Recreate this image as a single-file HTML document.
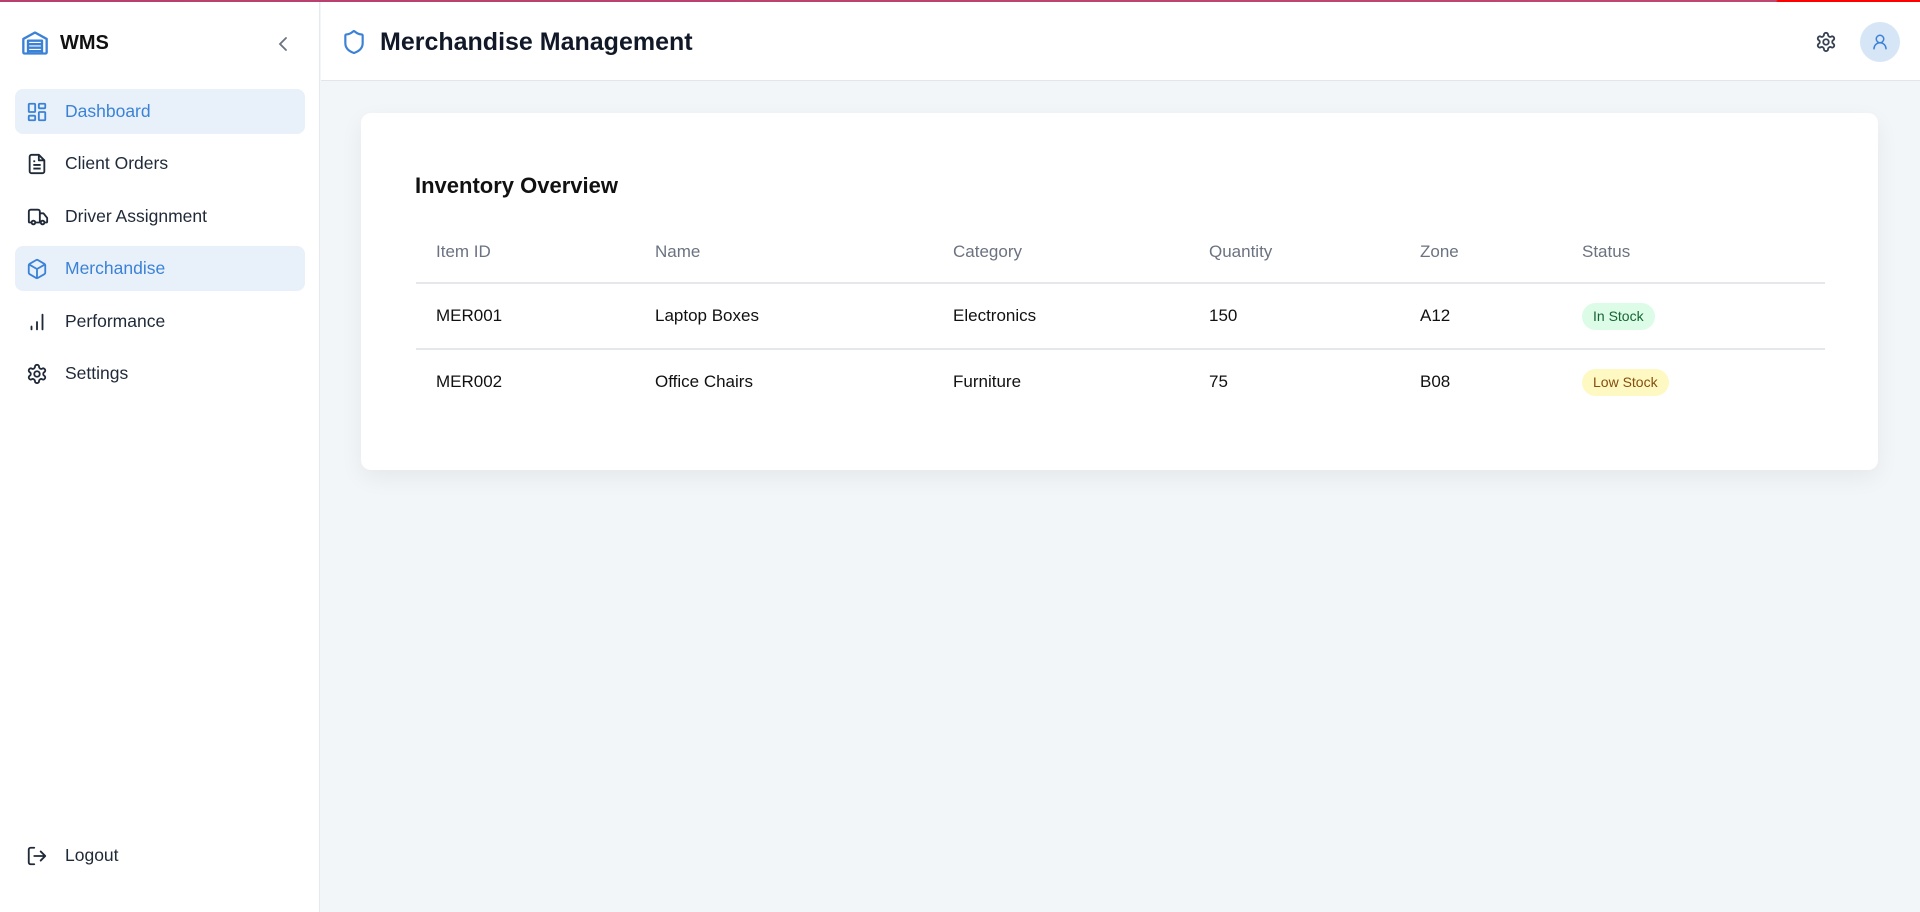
<!DOCTYPE html>
<html><head><meta charset="utf-8"><style>
*{box-sizing:border-box;margin:0;padding:0}
body{width:1920px;height:912px;overflow:hidden;font-family:"Liberation Sans",sans-serif;background:#f3f6f9;position:relative;color:#111}
.topline{position:absolute;top:0;left:0;width:1920px;height:2px;background:linear-gradient(90deg,#b8406e 0,#c04672 92.5%,#ff0000 92.6%);z-index:5}
.side{position:absolute;top:2px;left:0;width:320px;height:910px;background:#fff;border-right:1px solid #e6e9ee}
.logo{position:absolute;left:21px;top:27px}
.wms{position:absolute;left:60px;top:30px;font-weight:bold;font-size:20px}
.chev{position:absolute;left:276px;top:32px}
.nav{position:absolute;left:15px;width:290px;height:45px;border-radius:8px;display:flex;align-items:center;font-size:17.5px;color:#1f2937}
.nav.act{background:#e8f1fa;color:#3b82d6}
.nav svg{position:absolute;left:11px}
.nav span{position:absolute;left:50px}
.header{position:absolute;top:2px;left:321px;right:0;height:79px;background:#fff;border-bottom:1px solid #e2e6eb}
.title{position:absolute;left:59px;top:26px;font-size:25px;font-weight:bold;color:#111827}
.card{position:absolute;left:361px;top:113px;width:1517px;height:357px;background:#fff;border-radius:10px;box-shadow:0 8px 24px rgba(0,0,0,.06)}
.card h2{position:absolute;left:54px;top:60px;font-size:22px;font-weight:bold}
.th,.td{position:absolute;font-size:17px}
.th{color:#6b7280;top:129px}
.line{position:absolute;left:55px;width:1409px;height:2px;background:#e5e7eb}
.badge{position:absolute;left:1221px;height:27px;border-radius:14px;font-size:14px;line-height:27px;padding:0 11px}
</style></head><body>
<div class="topline"></div>
<div class="side">
<svg class="logo" width="28" height="28" viewBox="0 0 24 24" fill="none" stroke="#3b82d6" stroke-width="2" stroke-linejoin="round"><path d="M2 8.5 12 3l10 5.5V20a1 1 0 0 1-1 1H3a1 1 0 0 1-1-1z"/><path d="M6 21V10h12v11M6 13h12M6 16h12M6 19h12"/></svg>
<div class="wms">WMS</div>
<svg class="chev" width="16" height="20" viewBox="0 0 16 20" fill="none" stroke="#6b7280" stroke-width="1.8" stroke-linecap="round"><path d="M10 4 4 10l6 6"/></svg>
<div class="nav act" style="top:87px"><svg width="22" height="22" viewBox="0 0 24 24" fill="none" stroke="#3b82d6" stroke-width="2"><rect x="3" y="3" width="7" height="9" rx="1"/><rect x="14" y="3" width="7" height="5" rx="1"/><rect x="14" y="12" width="7" height="9" rx="1"/><rect x="3" y="16" width="7" height="5" rx="1"/></svg><span>Dashboard</span></div>
<div class="nav" style="top:139px"><svg width="22" height="22" viewBox="0 0 24 24" fill="none" stroke="#1f2937" stroke-width="2" stroke-linejoin="round"><path d="M14 2H6a2 2 0 0 0-2 2v16a2 2 0 0 0 2 2h12a2 2 0 0 0 2-2V8z"/><path d="M14 2v6h6M8 13h8M8 17h8M8 9h2"/></svg><span>Client Orders</span></div>
<div class="nav" style="top:192px"><svg width="24" height="22" viewBox="0 0 24 24" fill="none" stroke="#1f2937" stroke-width="2" stroke-linejoin="round"><path d="M14 18V6a2 2 0 0 0-2-2H4a2 2 0 0 0-2 2v11a1 1 0 0 0 1 1h2M15 18H9M19 18h2a1 1 0 0 0 1-1v-3.6a1 1 0 0 0-.2-.6l-3.5-4.4A1 1 0 0 0 17.5 8H14"/><circle cx="17" cy="18" r="2"/><circle cx="7" cy="18" r="2"/></svg><span>Driver Assignment</span></div>
<div class="nav act" style="top:244px"><svg width="22" height="22" viewBox="0 0 24 24" fill="none" stroke="#3b82d6" stroke-width="2" stroke-linejoin="round"><path d="M21 8a2 2 0 0 0-1-1.7l-7-4a2 2 0 0 0-2 0l-7 4A2 2 0 0 0 3 8v8a2 2 0 0 0 1 1.7l7 4a2 2 0 0 0 2 0l7-4a2 2 0 0 0 1-1.7z"/><path d="M3.3 7 12 12l8.7-5M12 22V12"/></svg><span>Merchandise</span></div>
<div class="nav" style="top:297px"><svg width="22" height="22" viewBox="0 0 24 24" fill="none" stroke="#1f2937" stroke-width="2" stroke-linecap="round"><path d="M6 20v-3M12 20v-8M18 20V4"/></svg><span>Performance</span></div>
<div class="nav" style="top:349px"><svg width="22" height="22" viewBox="0 0 24 24" fill="none" stroke="#1f2937" stroke-width="2"><path d="M12.2 2h-.4a2 2 0 0 0-2 2v.2a2 2 0 0 1-1 1.7l-.4.3a2 2 0 0 1-2 0l-.2-.1a2 2 0 0 0-2.7.7l-.2.4a2 2 0 0 0 .7 2.7l.2.1a2 2 0 0 1 1 1.7v.5a2 2 0 0 1-1 1.7l-.2.1a2 2 0 0 0-.7 2.7l.2.4a2 2 0 0 0 2.7.7l.2-.1a2 2 0 0 1 2 0l.4.3a2 2 0 0 1 1 1.7v.2a2 2 0 0 0 2 2h.4a2 2 0 0 0 2-2v-.2a2 2 0 0 1 1-1.7l.4-.3a2 2 0 0 1 2 0l.2.1a2 2 0 0 0 2.7-.7l.2-.4a2 2 0 0 0-.7-2.7l-.2-.1a2 2 0 0 1-1-1.7v-.5a2 2 0 0 1 1-1.7l.2-.1a2 2 0 0 0 .7-2.7l-.2-.4a2 2 0 0 0-2.7-.7l-.2.1a2 2 0 0 1-2 0l-.4-.3a2 2 0 0 1-1-1.7V4a2 2 0 0 0-2-2z"/><circle cx="12" cy="12" r="3"/></svg><span>Settings</span></div>
<div class="nav" style="top:831px"><svg width="22" height="22" viewBox="0 0 24 24" fill="none" stroke="#1f2937" stroke-width="2" stroke-linecap="round" stroke-linejoin="round"><path d="M9 21H5a2 2 0 0 1-2-2V5a2 2 0 0 1 2-2h4M16 17l5-5-5-5M21 12H9"/></svg><span>Logout</span></div>
</div>
<div class="header">
<svg style="position:absolute;left:20px;top:26px" width="26" height="28" viewBox="0 0 24 24" fill="none" stroke="#3b82d6" stroke-width="2" stroke-linejoin="round"><path d="M20 13c0 5-3.5 7.5-7.7 9a1 1 0 0 1-.7 0C7.5 20.5 4 18 4 13V6a1 1 0 0 1 1-1c2 0 4.5-1.2 6.2-2.7a1.2 1.2 0 0 1 1.5 0C14.5 3.8 17 5 19 5a1 1 0 0 1 1 1z"/></svg>
<div class="title">Merchandise Management</div>
<svg style="position:absolute;left:1494px;top:29px" width="22" height="22" viewBox="0 0 24 24" fill="none" stroke="#374151" stroke-width="2"><path d="M12.2 2h-.4a2 2 0 0 0-2 2v.2a2 2 0 0 1-1 1.7l-.4.3a2 2 0 0 1-2 0l-.2-.1a2 2 0 0 0-2.7.7l-.2.4a2 2 0 0 0 .7 2.7l.2.1a2 2 0 0 1 1 1.7v.5a2 2 0 0 1-1 1.7l-.2.1a2 2 0 0 0-.7 2.7l.2.4a2 2 0 0 0 2.7.7l.2-.1a2 2 0 0 1 2 0l.4.3a2 2 0 0 1 1 1.7v.2a2 2 0 0 0 2 2h.4a2 2 0 0 0 2-2v-.2a2 2 0 0 1 1-1.7l.4-.3a2 2 0 0 1 2 0l.2.1a2 2 0 0 0 2.7-.7l.2-.4a2 2 0 0 0-.7-2.7l-.2-.1a2 2 0 0 1-1-1.7v-.5a2 2 0 0 1 1-1.7l.2-.1a2 2 0 0 0 .7-2.7l-.2-.4a2 2 0 0 0-2.7-.7l-.2.1a2 2 0 0 1-2 0l-.4-.3a2 2 0 0 1-1-1.7V4a2 2 0 0 0-2-2z"/><circle cx="12" cy="12" r="3"/></svg>
<div style="position:absolute;left:1539px;top:20px;width:40px;height:40px;border-radius:50%;background:#d6e6f6"></div>
<svg style="position:absolute;left:1550px;top:31px" width="18" height="18" viewBox="0 0 24 24" fill="none" stroke="#3b82d6" stroke-width="2" stroke-linecap="round"><circle cx="12" cy="8" r="5"/><path d="M20 21a8 8 0 0 0-16 0"/></svg>
</div>
<div class="card">
<h2>Inventory Overview</h2>
<div class="th" style="left:75px">Item ID</div>
<div class="th" style="left:294px">Name</div>
<div class="th" style="left:592px">Category</div>
<div class="th" style="left:848px">Quantity</div>
<div class="th" style="left:1059px">Zone</div>
<div class="th" style="left:1221px">Status</div>
<div class="line" style="top:169px"></div>
<div class="td" style="left:75px;top:193px">MER001</div>
<div class="td" style="left:294px;top:193px">Laptop Boxes</div>
<div class="td" style="left:592px;top:193px">Electronics</div>
<div class="td" style="left:848px;top:193px">150</div>
<div class="td" style="left:1059px;top:193px">A12</div>
<div class="badge" style="top:190px;background:#dcfce7;color:#166534">In Stock</div>
<div class="line" style="top:235px"></div>
<div class="td" style="left:75px;top:259px">MER002</div>
<div class="td" style="left:294px;top:259px">Office Chairs</div>
<div class="td" style="left:592px;top:259px">Furniture</div>
<div class="td" style="left:848px;top:259px">75</div>
<div class="td" style="left:1059px;top:259px">B08</div>
<div class="badge" style="top:256px;background:#fef9c3;color:#854d0e">Low Stock</div>
</div>
</body></html>
